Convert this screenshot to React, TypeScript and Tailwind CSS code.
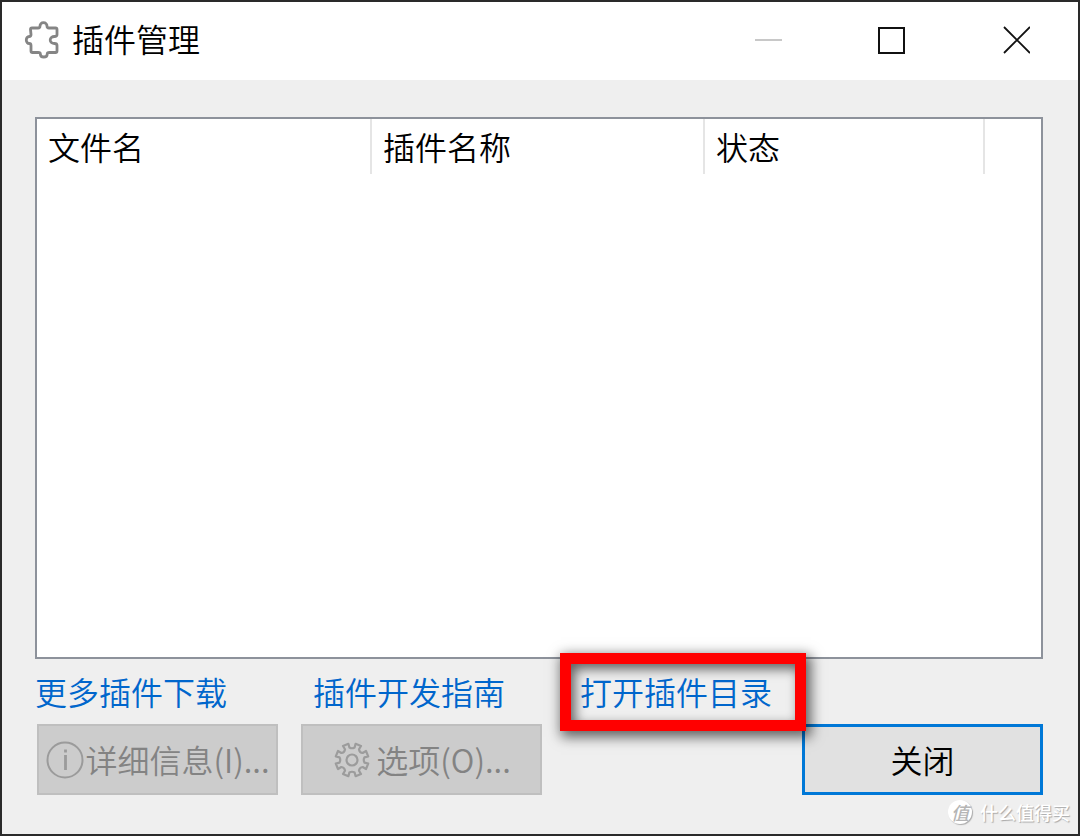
import React from 'react'

type Column = {
  title: string;
  width: string;
}

const columns: Column[] = [
  { title: '文件名', width: 'w-[334px]' },
  { title: '插件名称', width: 'w-[333px]' },
  { title: '状态', width: 'w-[280px]' },
]

const PuzzleIcon = () => (
  <svg className="h-10 w-10" viewBox="0 0 40 40" fill="none" stroke="#858585" strokeWidth="2.8" strokeLinejoin="round">
    <path d="M8.500 9.500q0-1.500 1.500-1.500h6c1.800 0 2-.8 2-2 0-1.800 1.400-3.400 3.500-3.400s3.500 1.600 3.500 3.400c0 1.200.2 2 2 2h6.500q1.500 0 1.500 1.500v5c0 1.500-1 2-2.600 2-2 0-4.200 1.200-4.200 3.500s2.200 3.500 4.200 3.500c1.600 0 2.600.5 2.600 2v5.500q0 1.500-1.500 1.500h-6c-1.800 0-2.300.6-2.300 1.700 0 1.600-1.400 2.800-3.400 2.800s-3.400-1.200-3.400-2.800c0-1.100-.5-1.700-2.300-1.700h-5.600q-1.500 0-1.500-1.500v-5.500c0-1.600-.6-2-1.800-2-1.600 0-2.900-1.500-2.900-3.500s1.300-3.500 2.900-3.500c1.200 0 1.800-.4 1.800-2z" />
  </svg>
)

const InfoIcon = () => (
  <svg className="h-10 w-10 shrink-0" viewBox="0 0 40 40" fill="none" stroke="#9b9b9b" strokeWidth="2">
    <circle cx="20" cy="20" r="17.500" />
    <path d="M20.500 15v15M20.500 9.500v3" strokeWidth="2.800" />
  </svg>
)

const GearIcon = () => (
  <svg className="h-10 w-10 shrink-0" viewBox="-20 -20 40 40" fill="none" stroke="#9c9c9c" strokeWidth="2.200" strokeLinejoin="round">
    <circle r="5.500" />
    <path d="M-2.600-12.500Q0-11 2.600-12.500L3.600-16.200 9-14 7-10.700Q7.400-7.400 10.700-7L14-9 16.200-3.600 12.500-2.600Q11 0 12.500 2.600L16.200 3.600 14 9 10.700 7Q7.400 7.400 7 10.700L9 14 3.600 16.200 2.600 12.500Q0 11-2.600 12.500L-3.600 16.200-9 14-7 10.700Q-7.400 7.400-10.700 7L-14 9-16.200 3.600-12.500 2.600Q-11 0-12.500-2.600L-16.200-3.600-14-9-10.700-7Q-7.400-7.400-7-10.700L-9-14-3.600-16.200Z" />
  </svg>
)

const TitleBar = () => {
  return (
    <header className="flex h-[78px] items-center bg-white pb-[2px] pl-5">
      <PuzzleIcon />
      <h1 className="ml-[10px] flex-1 pb-1 leading-10">插件管理</h1>
      <div className="flex h-full">
        <button aria-label="最小化" disabled className="flex w-[124px] items-center justify-center">
          <svg className="h-7 w-7" viewBox="0 0 28 28" stroke="#c8c8c8" strokeWidth="2">
            <path d="M1 14h27" />
          </svg>
        </button>
        <button aria-label="最大化" className="flex w-[124px] items-center justify-center">
          <svg className="h-7 w-7" viewBox="0 0 28 28" fill="none" stroke="#111" strokeWidth="2">
            <path d="M1 2h25v25h-25z" />
          </svg>
        </button>
        <button aria-label="关闭窗口" className="flex w-[124px] items-center justify-center">
          <svg className="h-7 w-7" viewBox="0 0 28 28" stroke="#111" strokeWidth="1.800">
            <path d="M2 1l26 26M28 1L2 27" />
          </svg>
        </button>
      </div>
    </header>
  );
};

const PluginTable = () => {
  return (
    <div className="flex-1 border-2 border-[#8d929b] bg-white">
      <table className="w-full table-fixed text-left">
        <thead>
          <tr>
            {columns.map((col) => (
              <th key={col.title} className={`${col.width} h-[55px] border-r-2 border-[#e5e5e5] pb-[2px] pl-[11px] font-[350]`}>
                {col.title}
              </th>
            ))}
            <td></td>
          </tr>
        </thead>
        <tbody></tbody>
      </table>
    </div>
  );
};

const Watermark = () => {
  return (
    <div className="absolute right-2 bottom-2 flex items-center gap-2 text-lg leading-7 font-medium text-white [text-shadow:1px_1px_1px_#a8a8a8]">
      <span className="flex h-6 w-6 items-center justify-center rounded-full bg-white text-[#b5b5b5] shadow-[1px_1px_1px_#aaa] [text-shadow:none]">
        <span className="italic">值</span>
      </span>
      什么值得买
    </div>
  );
};

export default function App() {
  return (
    <div className="relative flex min-h-screen flex-col border-2 border-[#2a2a2a] bg-[#efefef] font-['Noto_Sans_CJK_SC',sans-serif] text-[32px] leading-10 font-[350] text-black">
      <TitleBar />
      <main className="flex flex-1 flex-col pt-[37px] pr-[35px] pb-[39px] pl-[33px]">
        <PluginTable />

        <nav className="flex h-[65px] items-center pb-[2px] text-[#0066cc]">
          <a href="#more" className="w-[278px]">更多插件下载</a>
          <a href="#guide" className="w-[267px]">插件开发指南</a>
          <span className="relative">
            <a href="#folder">打开插件目录</a>
            {/* highlight frame */}
            <span className="pointer-events-none absolute -top-[18px] -right-[34px] -bottom-5 -left-5 border-[11px] border-[#ff0000] shadow-[3px_4px_12px_2px_rgba(0,0,0,0.600),inset_4px_5px_12px_rgba(0,0,0,0.600)]"></span>
          </span>
        </nav>

        <div className="flex gap-[23px] pl-[2px]">
          <button disabled className="flex h-[71px] w-[241px] items-center justify-center border-2 border-[#bfbfbf] bg-[#cccccc] text-[#838383]">
            <InfoIcon />
            <span className="pb-[2px]">详细信息(I)...</span>
          </button>
          <button disabled className="flex h-[71px] w-[241px] items-center justify-center gap-1 border-2 border-[#bfbfbf] bg-[#cccccc] text-[#838383]">
            <GearIcon />
            <span className="pb-[2px]">选项(O)...</span>
          </button>
          <button className="ml-auto h-[71px] w-[241px] border-[3px] border-[#0078d7] bg-[#e1e1e1] pb-[2px]">关闭</button>
        </div>
      </main>
      <Watermark />
    </div>
  )
}
